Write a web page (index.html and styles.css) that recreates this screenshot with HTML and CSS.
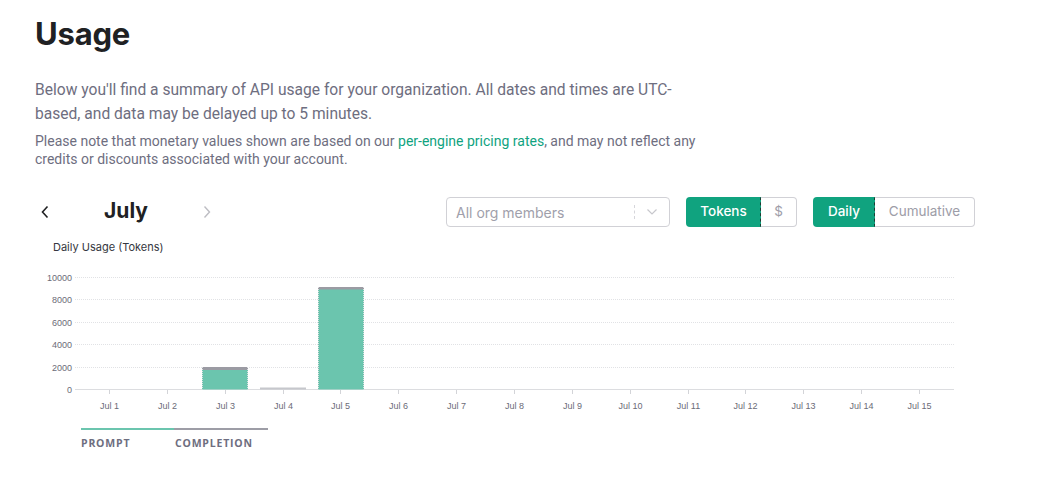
FILE: index.html
```html
<!DOCTYPE html>
<html>
<head>
<meta charset="utf-8">
<link rel="stylesheet" href="styles.css">
</head>
<body>
<main class="page">
  <h1 class="title">Usage</h1>
  <p class="lead">Below you'll find a summary of API usage for your organization. All dates and times are UTC-based, and data may be delayed up to 5 minutes.</p>
  <p class="note">Please note that monetary values shown are based on our <a class="link" href="#">per-engine pricing rates</a>, and may not reflect any credits or discounts associated with your account.</p>

  <div class="controls">
    <div class="month-nav">
      <button class="nav-btn prev" aria-label="Previous month">
        <svg width="10" height="14" viewBox="0 0 10 14"><path d="M7.5 1.5 L2.5 7 L7.5 12.5" fill="none" stroke="#202123" stroke-width="1.6"/></svg>
      </button>
      <div class="month">July</div>
      <button class="nav-btn next" aria-label="Next month">
        <svg width="10" height="14" viewBox="0 0 10 14"><path d="M2.5 1.5 L7.5 7 L2.5 12.5" fill="none" stroke="#bdbdc3" stroke-width="1.4"/></svg>
      </button>
    </div>
    <div class="select">
      <span class="select-text">All org members</span>
      <span class="select-sep"></span>
      <svg class="select-arrow" width="12" height="8" viewBox="0 0 12 8"><path d="M1.5 1.5 L6 6 L10.5 1.5" fill="none" stroke="#c7c7cc" stroke-width="1.2"/></svg>
    </div>
    <div class="toggle">
      <span class="seg active tokens">Tokens</span><span class="seg dollar">$</span>
    </div>
    <div class="toggle">
      <span class="seg active daily">Daily</span><span class="seg cumulative">Cumulative</span>
    </div>
  </div>

  <div class="chart-title">Daily Usage (Tokens)</div>

  <svg class="chart" width="960" height="152" viewBox="0 0 960 152">
    <g class="grid" stroke="#e1e2e5" stroke-width="1" stroke-dasharray="1 1">
      <line x1="35" x2="914" y1="12.5" y2="12.5"/>
      <line x1="35" x2="914" y1="34.5" y2="34.5"/>
      <line x1="35" x2="914" y1="57.5" y2="57.5"/>
      <line x1="35" x2="914" y1="79.5" y2="79.5"/>
      <line x1="35" x2="914" y1="102.5" y2="102.5"/>
    </g>
    <line x1="35" x2="914" y1="124.5" y2="124.5" stroke="#dcdde0" stroke-width="1"/>
    <g class="ylabels" font-family="'Liberation Sans', Arial, sans-serif" font-size="9" fill="#6b6b78" text-anchor="end">
      <text x="32" y="15.5">10000</text>
      <text x="32" y="37.5">8000</text>
      <text x="32" y="60.5">6000</text>
      <text x="32" y="82.5">4000</text>
      <text x="32" y="105.5">2000</text>
      <text x="32" y="127.5">0</text>
    </g>
    <g class="bars">
      <rect x="162" y="104.5" width="46" height="20" fill="#6bc5ae"/>
      <rect x="162" y="102" width="46" height="3" fill="#9b9ba3"/>
      <line x1="162.5" x2="162.5" y1="102" y2="124.5" stroke="#dedfe2" stroke-width="1" stroke-dasharray="1 1"/>
      <line x1="207.5" x2="207.5" y1="102" y2="124.5" stroke="#dedfe2" stroke-width="1" stroke-dasharray="1 1"/>
      <rect x="220" y="122.5" width="46" height="2" fill="#c6c7cc"/>
      <rect x="278" y="24" width="46" height="100.5" fill="#6bc5ae"/>
      <rect x="278" y="22" width="46" height="2.5" fill="#9b9ba3"/>
      <line x1="278.5" x2="278.5" y1="22" y2="124.5" stroke="#dedfe2" stroke-width="1" stroke-dasharray="1 1"/>
      <line x1="323.5" x2="323.5" y1="22" y2="124.5" stroke="#dedfe2" stroke-width="1" stroke-dasharray="1 1"/>
    </g>
    <g class="ticks" stroke="#d3d4d8" stroke-width="1">
      <line x1="69.5" x2="69.5" y1="125" y2="129"/>
      <line x1="127.5" x2="127.5" y1="125" y2="129"/>
      <line x1="185.5" x2="185.5" y1="125" y2="129"/>
      <line x1="243.5" x2="243.5" y1="125" y2="129"/>
      <line x1="300.5" x2="300.5" y1="125" y2="129"/>
      <line x1="358.5" x2="358.5" y1="125" y2="129"/>
      <line x1="416.5" x2="416.5" y1="125" y2="129"/>
      <line x1="474.5" x2="474.5" y1="125" y2="129"/>
      <line x1="532.5" x2="532.5" y1="125" y2="129"/>
      <line x1="590.5" x2="590.5" y1="125" y2="129"/>
      <line x1="648.5" x2="648.5" y1="125" y2="129"/>
      <line x1="705.5" x2="705.5" y1="125" y2="129"/>
      <line x1="763.5" x2="763.5" y1="125" y2="129"/>
      <line x1="821.5" x2="821.5" y1="125" y2="129"/>
      <line x1="879.5" x2="879.5" y1="125" y2="129"/>
    </g>
    <g class="xlabels" font-family="'Liberation Sans', Arial, sans-serif" font-size="9" fill="#6b6b78" text-anchor="middle">
      <text x="69.5" y="144">Jul 1</text>
      <text x="127.5" y="144">Jul 2</text>
      <text x="185.5" y="144">Jul 3</text>
      <text x="243.5" y="144">Jul 4</text>
      <text x="300.5" y="144">Jul 5</text>
      <text x="358.5" y="144">Jul 6</text>
      <text x="416.5" y="144">Jul 7</text>
      <text x="474.5" y="144">Jul 8</text>
      <text x="532.5" y="144">Jul 9</text>
      <text x="590.5" y="144">Jul 10</text>
      <text x="648.5" y="144">Jul 11</text>
      <text x="705.5" y="144">Jul 12</text>
      <text x="763.5" y="144">Jul 13</text>
      <text x="821.5" y="144">Jul 14</text>
      <text x="879.5" y="144">Jul 15</text>
    </g>
  </svg>

  <div class="legend">
    <div class="legend-item prompt">PROMPT</div>
    <div class="legend-item completion">COMPLETION</div>
  </div>
</main>
</body>
</html>
```

FILE: styles.css
```css
* { box-sizing: border-box; }
html, body { margin: 0; padding: 0; background: #ffffff; }
body {
  font-family: Inter, "Noto Sans", "Liberation Sans", sans-serif;
  color: #202123;
}
.page {
  padding: 14px 0 0 35px;
  width: 1060px;
}
.title {
  margin: 0;
  font-size: 31px;
  line-height: 40px;
  font-weight: 700;
  color: #202123;
  letter-spacing: -0.2px;
}
.lead {
  margin: 24px 0 0;
  max-width: 650px;
  font-family: Roboto, "Liberation Sans", sans-serif;
  font-size: 15.6px;
  line-height: 24px;
  color: #6e6e80;
}
.note {
  margin: 6px 0 0;
  max-width: 685px;
  font-family: Roboto, "Liberation Sans", sans-serif;
  font-size: 14px;
  line-height: 18px;
  color: #6e6e80;
}
.link { color: #10a37f; text-decoration: none; }

.controls {
  display: flex;
  align-items: center;
  width: 940px;
  margin-top: 29px;
  height: 30px;
}
.month-nav {
  display: flex;
  align-items: center;
}
.nav-btn {
  border: 0;
  background: none;
  padding: 0;
  width: 20px;
  height: 24px;
  display: flex;
  align-items: center;
  justify-content: center;
  cursor: pointer;
}
.month {
  width: 142px;
  text-align: center;
  font-size: 21px;
  font-weight: 700;
  color: #202123;
  margin-top: -4px;
}
.select {
  margin-left: auto;
  width: 224px;
  height: 30px;
  border: 1px solid #d1d1d6;
  border-radius: 4px;
  display: flex;
  align-items: center;
  padding-left: 9px;
}
.select-text {
  flex: 1;
  font-size: 14px;
  color: #a0a0ab;
}
.select-sep {
  width: 0;
  height: 14px;
  border-left: 1px dashed #d6d6db;
}
.select-arrow { margin: 0 11px 0 11px; }
.toggle {
  display: flex;
  margin-left: 16px;
  height: 30px;
}
.seg {
  display: flex;
  align-items: center;
  justify-content: center;
  font-size: 13.5px;
  height: 30px;
  color: #9d9da8;
  border: 1px solid #d1d1d6;
  padding-bottom: 2px;
}
.seg.active {
  background: #10a37f;
  border-color: #10a37f;
  color: #ffffff;
  font-weight: 500;
  border-radius: 4px 0 0 4px;
  border-right: 1px dashed #1c3c33;
}
.seg:last-child {
  border-left: 0;
  border-radius: 0 4px 4px 0;
}
.tokens { width: 75px; }
.dollar { width: 36px; }
.daily { width: 62px; }
.cumulative { width: 100px; }

.chart-title {
  margin: 13px 0 0 18px;
  font-size: 11px;
  line-height: 14px;
  color: #353740;
}
.chart {
  display: block;
  margin: 11px 0 0 5px;
}
.legend {
  display: flex;
  margin: 11px 0 0 46px;
}
.legend-item {
  width: 93px;
  padding-top: 6px;
  font-size: 10.5px;
  font-weight: 700;
  letter-spacing: 0.8px;
  color: #6e6e80;
  font-family: "Open Sans", "Noto Sans", sans-serif;
}
.prompt { border-top: 2px solid #6bc5ae; }
.completion { border-top: 2px solid #9d9da6; width: 94px; padding-left: 1px; }
```
